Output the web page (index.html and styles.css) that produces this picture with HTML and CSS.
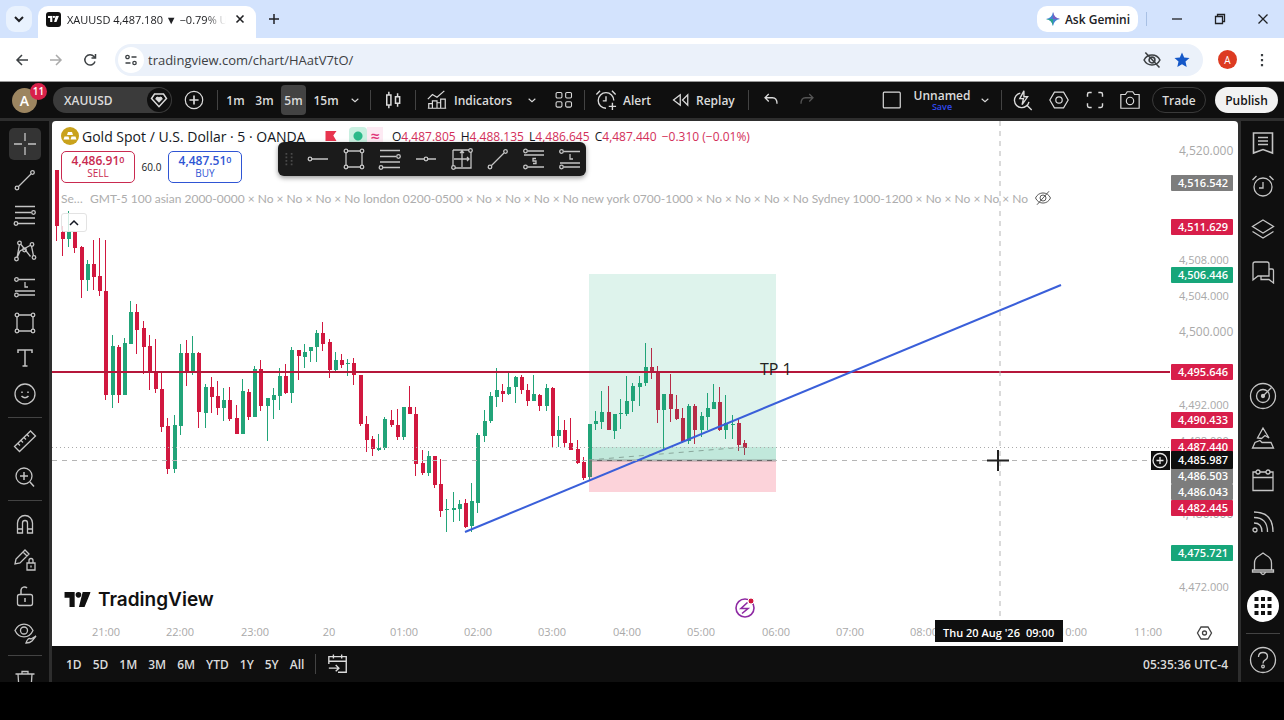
FILE: index.html
```
<!DOCTYPE html>
<html lang="en">
<head>
  <meta charset="UTF-8">
  <meta name="viewport" content="width=device-width, initial-scale=1.0">
  <title>XAUUSD 4,487.180</title>
  <link rel="stylesheet" href="styles.css">
</head>
<body>

  <!-- Shared icons -->
  <svg class="sprite" aria-hidden="true">
    <symbol id="chevron" viewBox="0 0 24 24"><path d="M8 10.5l4 3.5 4-3.5"/></symbol>
    <symbol id="trend" viewBox="0 0 24 24"><path d="M5.5 18.500L18 6"/><circle cx="4" cy="20" r="1.800"/><circle cx="19.500" cy="4.500" r="1.800"/></symbol>
    <symbol id="fib" viewBox="0 0 24 24"><path d="M2 3.500h20M2 9.500h16M2 15h20M5 20.500h17"/><circle cx="20.500" cy="9.500" r="1.800"/><circle cx="3" cy="20.500" r="1.800"/></symbol>
    <symbol id="pattern" viewBox="0 0 24 24"><path d="M4 19L6.500 5M8 5.500l9.500 12M18 6l-11 6-3 7M18.500 7l2 10"/><circle cx="6.500" cy="4" r="1.800"/><circle cx="19" cy="5.500" r="1.800"/><circle cx="11.500" cy="11" r="1.800"/><circle cx="3.500" cy="20" r="1.800"/><circle cx="21" cy="18.500" r="1.800"/></symbol>
    <symbol id="long" viewBox="0 0 24 24"><path d="M5.500 4.500H22M5.500 20H22M2 16h20M12 7v5h3"/><circle cx="3.500" cy="4.500" r="1.800"/><circle cx="3.500" cy="20" r="1.800"/></symbol>
    <symbol id="short" viewBox="0 0 24 24"><path d="M5.500 4H22M2 8h20M5.500 20H22M14 11.500h-3v2.500h3v2.500h-3"/><circle cx="3.500" cy="4" r="1.800"/><circle cx="3.500" cy="20" r="1.800"/></symbol>
    <symbol id="rect" viewBox="0 0 24 24"><path d="M5.500 4h13M5.500 20h13M4 5.500v13M20 5.500v13"/><circle cx="4" cy="4" r="1.800"/><circle cx="20" cy="4" r="1.800"/><circle cx="4" cy="20" r="1.800"/><circle cx="20" cy="20" r="1.800"/></symbol>
    <symbol id="alarm" viewBox="0 0 24 24"><circle cx="12" cy="13" r="9"/><path d="M12 8v6H8M1.500 6l4-4M22.500 6l-4-4"/></symbol>
    <symbol id="hexagon" viewBox="0 0 24 24"><path d="M7 3.500h10l5 8.500-5 8.500H7L2 12z"/><circle cx="12" cy="12" r="3.500"/></symbol>
    <symbol id="eye-off" viewBox="0 0 24 24"><path d="M2 12c4-9 16-9 20 0-4 9-16 9-20 0zM4 21L20 3"/><circle cx="12" cy="12" r="4"/></symbol>
    <symbol id="tv" viewBox="0 0 28 17"><path d="M0 0h11v16H5.500V6H0zM19.500 0H28l-6.500 16h-6z" fill="currentColor" stroke="none"/><circle cx="15" cy="3" r="3" fill="currentColor" stroke="none"/></symbol>
  </svg>

  <header class="browser">
    <div class="tab-strip">
      <button class="tab-search" aria-label="Search tabs"><svg class="i16" viewBox="0 0 24 24"><path d="M6 9l6 6 6-6" stroke-width="3"/></svg></button>
      <div class="tab">
        <span class="favicon"><svg viewBox="0 0 28 17"><use href="#tv"/></svg></span>
        <span class="tab-title">XAUUSD 4,487.180 ▼ −0.79% Unnamed</span>
        <button class="tab-close" aria-label="Close tab"><svg class="i16" viewBox="0 0 16 16"><path d="M4.500 4.500l7 7M11.500 4.500l-7 7" stroke-width="1.600"/></svg></button>
      </div>
      <button class="new-tab" aria-label="New tab"><svg class="i16" viewBox="0 0 16 16"><path d="M8 3v10M3 8h10" stroke-width="1.500"/></svg></button>
      <button class="gemini"><svg class="i16" viewBox="0 0 16 16"><path d="M8 1q1 6 7 7-6 1-7 7-1-6-7-7 6-1 7-7z" fill="#4285d4" stroke="none"/><path d="M8 1q1 6 7 7H8z" fill="#7b5fc0" stroke="none"/><path d="M1 8h7v7q-1-6-7-7z" fill="#2fa58a" stroke="none"/></svg>Ask Gemini</button>
      <span class="strip-sep"></span>
      <div class="window-buttons">
        <button aria-label="Minimise"><svg class="i16" viewBox="0 0 16 16"><path d="M3 8h10"/></svg></button>
        <button aria-label="Restore"><svg class="i16" viewBox="0 0 16 16"><path d="M3.500 5.500h7v7h-7zM5.500 5.500v-2h7v7h-2"/></svg></button>
        <button aria-label="Close"><svg class="i16" viewBox="0 0 16 16"><path d="M3.500 3.500l9 9M12.500 3.500l-9 9"/></svg></button>
      </div>
    </div>
    <div class="address-bar">
      <button class="nav-btn" aria-label="Back"><svg class="i16" viewBox="0 0 16 16"><path d="M14 8H3M8 3L3 8l5 5" stroke-width="1.500"/></svg></button>
      <button class="nav-btn off" aria-label="Forward"><svg class="i16" viewBox="0 0 16 16"><path d="M2 8h11M8 3l5 5-5 5" stroke-width="1.500"/></svg></button>
      <button class="nav-btn" aria-label="Reload"><svg class="i16" viewBox="0 0 16 16"><path d="M13 9.500A5.200 5.200 0 1 1 12 4.500l1.500 1.500M13.500 2v4h-4" stroke-width="1.500"/></svg></button>
      <div class="omnibox">
        <button class="site-info" aria-label="Site information"><svg class="i16" viewBox="0 0 16 16"><circle cx="4.500" cy="5" r="1.700"/><path d="M8.500 5h5M2.500 11h5"/><circle cx="11.500" cy="11" r="1.700"/></svg></button>
        <input type="text" aria-label="Address" value="tradingview.com/chart/HAatV7tO/">
        <svg class="i20" viewBox="0 0 24 24"><path d="M2.500 12c4-8 15-8 19 0-4 8-15 8-19 0zM4 3l17 18" stroke-width="1.900"/><circle cx="12" cy="12" r="3.500" stroke-width="1.900"/></svg>
        <svg class="i16 star" viewBox="0 0 16 16"><path d="M8 .5l2.200 5 5.300.5-4 3.600 1.200 5.400L8 12.200 3.300 15l1.200-5.400-4-3.600 5.300-.5z" stroke="none"/></svg>
      </div>
      <button class="profile" aria-label="Profile">A</button>
      <button class="nav-btn" aria-label="Menu"><svg class="i16" viewBox="0 0 16 16"><path d="M8 2v2.200M8 7v2.200M8 12v2.200" stroke-width="2.200"/></svg></button>
    </div>
  </header>

  <div class="app">
    <header class="topbar">
      <button class="account">A<span class="badge">11</span></button>
      <button class="symbol">XAUUSD<span class="gem"><svg class="i18" viewBox="0 0 24 24"><path d="M6 4h12l4 6-10 11L2 10z" stroke-width="2"/><path d="M12 15l-4-4a2 2 0 0 1 4-1.500A2 2 0 0 1 16 11z" fill="currentColor"/></svg></span></button>
      <button class="w40 plus" aria-label="Compare"><svg class="i22" viewBox="0 0 24 24"><circle cx="12" cy="12" r="9.500"/><path d="M12 7v10M7 12h10" stroke-width="1.800"/></svg></button>
      <span class="sep"></span>
      <button class="interval">1m</button>
      <button class="interval">3m</button>
      <button class="interval active">5m</button>
      <button class="interval long">15m</button>
      <button class="w24" aria-label="More intervals"><svg class="i20"><use href="#chevron"/></svg></button>
      <span class="sep"></span>
      <button class="w38" aria-label="Candles"><svg class="i20" viewBox="0 0 24 24"><path d="M4.500 6h5v12h-5zM7 2v4M7 18v4M15 8h5v8h-5zM17.500 4v4M17.500 16v4" stroke-width="1.800"/></svg></button>
      <span class="sep"></span>
      <button class="labelled indicators"><svg class="i22" viewBox="0 0 24 24"><path d="M3 21v-5h4v5M7 21v-8h5v8M12 21v-6h4v6M16 21V11h5v10zM2 21h20M2 11l5-5 5 3 8-7"/></svg>Indicators</button>
      <button class="w28" aria-label="Indicator templates"><svg class="i20"><use href="#chevron"/></svg></button>
      <button class="w35" aria-label="Layouts"><svg class="i20" viewBox="0 0 24 24"><rect x="2.500" y="3" width="7" height="6.500" rx="1.500"/><rect x="14" y="3" width="7" height="6.500" rx="1.500"/><rect x="2.500" y="14" width="7" height="6.500" rx="1.500"/><rect x="14" y="14" width="7" height="6.500" rx="1.500"/></svg></button>
      <span class="sep"></span>
      <button class="labelled alert"><svg class="i22" viewBox="0 0 24 24"><path d="M12 21a8.500 8.500 0 1 1 8.500-8.500M12 8v5H8.500M1.500 6l4-4M22.500 6l-4-4M19 15v8M15 19h8" stroke-width="1.500"/></svg>Alert</button>
      <button class="labelled replay"><svg class="i18" viewBox="0 0 24 24"><path d="M11 5v14l-9-7zM21 5v14l-7-7z" stroke-width="1.700"/></svg>Replay</button>
      <span class="sep"></span>
      <button class="w38" aria-label="Undo"><svg class="i18" viewBox="0 0 24 24"><path d="M9 4L4 9l5 5M4 9h10q6 0 6 8" stroke-width="1.700"/></svg></button>
      <button class="w34 dim" aria-label="Redo"><svg class="i18" viewBox="0 0 24 24"><path d="M15 4l5 5-5 5M20 9H10q-6 0-6 8" stroke-width="1.700"/></svg></button>

      <button class="w40 push" aria-label="Layout setup"><svg class="i22" viewBox="0 0 24 24"><rect x="2.500" y="3.500" width="18.500" height="17" rx="1"/></svg></button>
      <button class="layout-name">Unnamed<small>Save</small></button>
      <button class="w26" aria-label="Manage layouts"><svg class="i20"><use href="#chevron"/></svg></button>
      <span class="sep"></span>
      <button class="w36" aria-label="Quick search"><svg class="i22" viewBox="0 0 24 24"><path d="M9 4.500A8 8 0 1 0 18.500 14M16.500 18l5 5M13 2L8.500 10.500h4L11 17l6-8.500h-4z" stroke-width="1.500"/></svg></button>
      <button class="w36" aria-label="Settings"><svg class="i22"><use href="#hexagon"/></svg></button>
      <button class="w35" aria-label="Fullscreen"><svg class="i20" viewBox="0 0 24 24"><path d="M3 8V5q0-2 2-2h3M16 3h3q2 0 2 2v3M21 16v3q0 2-2 2h-3M8 21H5q-2 0-2-2v-3" stroke-width="1.700"/></svg></button>
      <button class="w35" aria-label="Snapshot"><svg class="i22" viewBox="0 0 24 24"><path d="M2 6h5l2-3h6l2 3h5v15H2z"/><circle cx="12" cy="13" r="4"/></svg></button>
      <button class="trade">Trade</button>
      <button class="publish">Publish</button>
    </header>

    <aside class="tools">
      <div class="tool-group drawing">
        <button class="active" aria-label="Cross"><svg class="i24" viewBox="0 0 24 24"><path d="M12 1v8M12 15v8M1 12h8M15 12h8"/></svg></button>
        <button aria-label="Trend line"><svg class="i24"><use href="#trend"/></svg></button>
        <button aria-label="Fib retracement"><svg class="i24"><use href="#fib"/></svg></button>
        <button aria-label="Patterns"><svg class="i24"><use href="#pattern"/></svg></button>
        <button aria-label="Long position"><svg class="i24"><use href="#long"/></svg></button>
        <button aria-label="Rectangle"><svg class="i24"><use href="#rect"/></svg></button>
        <button aria-label="Text"><svg class="i24" viewBox="0 0 24 24"><path d="M5 7V4h14v3M12 4v16M9.500 20h5" stroke-width="1.500"/></svg></button>
        <button aria-label="Icons"><svg class="i24" viewBox="0 0 24 24"><circle cx="12" cy="12" r="10"/><path d="M8.500 14q3.500 3.500 7 0M9 9.500v1.500M15 9.500v1.500" stroke-width="1.500"/></svg></button>
      </div>
      <hr>
      <div class="tool-group">
        <button aria-label="Measure"><svg class="i24" viewBox="0 0 24 24"><path d="M1.500 17.500l16-15.500 5 5L6.500 22.500zM5 14.500l2 2M8 11.500l2 2M11 8.500l2 2M14 5.500l2 2"/></svg></button>
        <button aria-label="Zoom in"><svg class="i24" viewBox="0 0 24 24"><circle cx="11" cy="11" r="8"/><path d="M17 17l4 4.500M11 7v8M7 11h8" stroke-width="1.500"/></svg></button>
      </div>
      <hr>
      <div class="tool-group">
        <button aria-label="Magnet"><svg class="i24" viewBox="0 0 24 24"><path d="M4.500 21V11a7.500 7.500 0 0 1 15 0v10h-5V11a2.500 2.500 0 0 0-5 0v10zM4.500 17h5M14.500 17h5"/></svg></button>
        <button aria-label="Stay in drawing mode"><svg class="i24" viewBox="0 0 24 24"><path d="M2 16l1-5 9-9 4 4-9 9zM10 4l4 4M14 15h8v7h-8zM16 15v-2.500a2 2 0 0 1 4 0V15M18 17.500v2"/></svg></button>
        <button aria-label="Lock"><svg class="i24" viewBox="0 0 24 24"><rect x="4.500" y="10.500" width="15" height="11" rx="2"/><path d="M8 10.500V6a3.500 3.500 0 0 1 6-2M12 14v4" stroke-width="1.500"/></svg></button>
        <button aria-label="Hide"><svg class="i24" viewBox="0 0 24 24"><path d="M2 10.500c4-8.500 14-8.500 18 0-4 8.500-14 8.500-18 0z"/><circle cx="11" cy="10.500" r="3.500"/><path d="M13 23q2-6 5-4l5-3-4 5q-2 2-6 2z"/></svg></button>
      </div>
      <hr>
      <button aria-label="Remove"><svg class="i24" viewBox="0 0 24 24"><path d="M2.500 7h19M5 7l1 15h12l1-15M9 7V4.500h6V7"/></svg></button>
    </aside>

    <main>
      <section class="chart">
        <svg class="plot" viewBox="52 121 1186 525" preserveAspectRatio="xMinYMin meet">
          <g id="candles"></g>
          <!-- long position -->
          <rect class="profit" x="589" y="274" width="187" height="186"/>
          <rect class="profit reached" x="589" y="447" width="187" height="13"/>
          <rect class="loss" x="589" y="460" width="187" height="32"/>
          <path class="entry" d="M589 460.500H776"/>
          <path class="path-line" d="M589 460L745 447"/>
          <path class="last-line" d="M52 447.500H1170"/>
          <path class="level" d="M52 372H1170"/>
          <path class="trend-line" d="M465 532L1061 285"/>
          <text class="note" x="760" y="375">TP 1</text>
          <!-- crosshair -->
          <path class="cross-line" d="M52 460.500H1152M1000 121V620"/>
          <path class="cursor" d="M998 450v21M987 460.500h22"/>
          <g class="event"><circle cx="745" cy="608" r="9"/><path d="M747.500 602.500l-6.500 6h7l-6 5"/><circle class="dot" cx="751" cy="601" r="3"/></g>
          <g id="priceAxis"></g>
          <g id="timeAxis"></g>
          <rect class="black" x="1151" y="451" width="19" height="19"/>
          <g class="add"><circle cx="1160" cy="460.500" r="7"/><path d="M1160 457v7M1156.500 460.500h7"/></g>
          <rect class="black" x="935" y="620" width="128" height="22"/>
          <text class="time-tip" x="943" y="637">Thu 20 Aug '26</text>
          <text class="time-tip" x="1026" y="637">09:00</text>
          <g class="axis-gear"><path d="M1201 627h7l3.500 6-3.500 6h-7l-3.500-6z"/><circle cx="1204.500" cy="633" r="2"/></g>
        </svg>

        <div class="legend">
          <div class="legend-row">
            <svg class="i18 gold" viewBox="0 0 18 18"><circle cx="9" cy="9" r="9" fill="#c9a21c"/><path d="M7 5h4l1 3H6zM3.500 9.500h4l1 3h-6zM10.500 9.500h4l1 3h-6z" fill="#fff"/></svg>
            <h1>Gold Spot / U.S. Dollar · 5 · OANDA</h1>
            <svg class="flag" viewBox="0 0 12 12"><path d="M0 0h12L8.500 5 12 11H0z" fill="#e8354f"/></svg>
            <span class="market"></span>
            <span class="delayed">≈</span>
            <p class="ohlc">O<b>4,487.805</b> H<b>4,488.135</b> L<b>4,486.645</b> C<b>4,487.440</b> <b>−0.310 (−0.01%)</b></p>
          </div>
          <div class="quotes">
            <button class="quote sell"><strong>4,486.91<sup>0</sup></strong>SELL</button>
            <span class="spread">60.0</span>
            <button class="quote buy"><strong>4,487.51<sup>0</sup></strong>BUY</button>
          </div>
          <div class="study">
            <span class="study-name">Se…</span>
            <span class="study-inputs">GMT-5 100 asian 2000-0000 × No × No × No × No london 0200-0500 × No × No × No × No new york 0700-1000 × No × No × No × No Sydney 1000-1200 × No × No × No × No Harmonic</span>
            <svg class="i18"><use href="#eye-off"/></svg>
          </div>
          <button class="collapse" aria-label="Collapse legend"><svg class="i16" viewBox="0 0 16 16"><path d="M4 10l4-4 4 4" stroke-width="1.500"/></svg></button>
        </div>

        <div class="favorites">
          <svg class="grip" viewBox="0 0 10 16"><path d="M1 2h2M7 2h2M1 6h2M7 6h2M1 10h2M7 10h2M1 14h2M7 14h2" stroke-width="2"/></svg>
          <button aria-label="Horizontal ray"><svg class="i24" viewBox="0 0 24 24"><circle cx="4" cy="12" r="1.800"/><path d="M6 12h16"/></svg></button>
          <button aria-label="Rectangle"><svg class="i24"><use href="#rect"/></svg></button>
          <button aria-label="Fib retracement"><svg class="i24"><use href="#fib"/></svg></button>
          <button aria-label="Horizontal line"><svg class="i24" viewBox="0 0 24 24"><circle cx="12" cy="12" r="1.800"/><path d="M2 12h8M14 12h8"/></svg></button>
          <button aria-label="Date and price range"><svg class="i24" viewBox="0 0 24 24"><path d="M3 3h16M21 5v16H5M3 3v16M12 4v16M4 12h15M10 6l2-2 2 2M17 10l2 2-2 2"/><circle cx="20.500" cy="3.500" r="1.800"/><circle cx="3.500" cy="20.500" r="1.800"/></svg></button>
          <button aria-label="Trend line"><svg class="i24"><use href="#trend"/></svg></button>
          <button aria-label="Short position"><svg class="i24"><use href="#short"/></svg></button>
          <button aria-label="Long position"><svg class="i24"><use href="#long"/></svg></button>
        </div>

        <a class="brand" href="#"><svg viewBox="0 0 28 17"><use href="#tv"/></svg>TradingView</a>
      </section>

      <footer class="ranges">
        <button>1D</button>
        <button>5D</button>
        <button>1M</button>
        <button>3M</button>
        <button>6M</button>
        <button>YTD</button>
        <button>1Y</button>
        <button>5Y</button>
        <button>All</button>
        <span class="sep"></span>
        <button aria-label="Go to date"><svg class="i22" viewBox="0 0 24 24"><path d="M2 9V4h19v5M2 9h19M2 9v3M21 9v12h-9M7 1.500V6M16 1.500V6M2 16.500h11M9.500 13l3.500 3.500L9.500 20" stroke-width="1.500"/></svg></button>
        <button class="clock">05:35:36 UTC-4</button>
      </footer>
    </main>

    <aside class="widgets">
      <div class="widget-group top">
        <button aria-label="Watchlist"><svg class="i24" viewBox="0 0 24 24"><path d="M2.500 2h19v20L12 18.500 2.500 22zM7 6.500h10M7 10h10M7 13.500h10" stroke-width="1.600"/></svg></button>
        <button aria-label="Alerts"><svg class="i24"><use href="#alarm"/></svg></button>
        <button aria-label="Object tree"><svg class="i24" viewBox="0 0 24 24"><path d="M12 3l10.500 6.500L12 16 1.500 9.500zM1.500 14.500L12 21l10.500-6.500"/></svg></button>
        <button aria-label="Chats"><svg class="i24" viewBox="0 0 24 24"><path d="M4 2h12q2 0 2 2v12H7l-5 4V4q0-2 2-2zM18 9h3q1.500 0 1.500 1.500V23l-4.500-3.500H10V16"/></svg></button>
      </div>
      <div class="widget-group bottom">
        <button aria-label="Screeners"><svg class="i28" viewBox="0 0 28 28"><circle cx="14" cy="14" r="12.500"/><circle cx="14" cy="14" r="6.500"/><circle cx="14" cy="14" r="1.500" fill="currentColor"/><path d="M14 14l8.500-8.500"/></svg></button>
        <button aria-label="Pine"><svg class="i24" viewBox="0 0 24 24"><path d="M6.500 12L12 2l6 10-4-2.500-3.500 3zM4 16.500L1.500 22h21L20 16.500l-9 0-2-2z"/></svg></button>
        <button aria-label="Calendar"><svg class="i24" viewBox="0 0 24 24"><path d="M5 4H2v18.500h20V4h-3M9 4h6M2 9.500h20"/><circle cx="7" cy="4" r="2"/><circle cx="17" cy="4" r="2"/></svg></button>
        <button aria-label="News"><svg class="i24" viewBox="0 0 24 24"><circle cx="4" cy="20" r="2"/><path d="M3 13q8 0 8 9M3 7.500q13.500 0 13.500 14.500M3 2q19 0 19 20"/></svg></button>
        <button aria-label="Notifications"><svg class="i24" viewBox="0 0 24 24"><path d="M3.500 18v-7q0-5 5-7.500L12 1l3.500 2.500q5 2.500 5 7.500v7M1.500 18h21v2h-21zM9.500 20.500q2.500 4 5 0"/></svg></button>
        <button class="apps" aria-label="Apps"><svg class="i20" viewBox="0 0 20 20"><path d="M1.500 3h4M8 3h4M14.500 3h4M1.500 10h4M8 10h4M14.500 10h4M1.500 17h4M8 17h4M14.500 17h4" stroke-width="4"/></svg></button>
        <hr>
        <button aria-label="Help"><svg class="i28" viewBox="0 0 28 28"><circle cx="14" cy="14" r="12.500"/><path d="M9.500 11q0-4.500 4.500-4.500t4.500 4q0 2.500-2.500 3.700-2 1-2 3.300"/><circle cx="14" cy="20.500" r="1.300"/></svg></button>
      </div>
    </aside>
  </div>

  <script src="script.js"></script>
</body>
</html>
```
FILE: styles.css
```
* {
  box-sizing: border-box;
}

body {
  margin: 0;
  height: 100vh;
  min-height: 720px;
  padding-bottom: 38px;
  display: flex;
  flex-direction: column;
  background: #000;
  font-family: "Open Sans", "Noto Sans", sans-serif;
  font-size: 12px;
}

button {
  display: flex;
  align-items: center;
  justify-content: center;
  flex: none;
  padding: 0;
  border: 0;
  background: none;
  color: inherit;
  font: inherit;
  white-space: nowrap;
  cursor: pointer;
}

svg {
  flex: none;
  fill: none;
  stroke: currentColor;
  stroke-width: 1.3;
}

.sprite { position: absolute; width: 0; height: 0; }
.i16 { width: 16px; height: 16px; }
.i18 { width: 18px; height: 18px; }
.i20 { width: 20px; height: 20px; }
.i22 { width: 22px; height: 22px; }
.i24 { width: 24px; height: 24px; }
.i28 { width: 28px; height: 28px; }

/* Browser window */
.browser {
  background: #fff;
  color: #202124;
}

.tab-strip {
  display: flex;
  align-items: center;
  height: 38px;
  padding-left: 6px;
  background: #d3e3fd;
}

.tab-search {
  width: 26px;
  height: 26px;
  border-radius: 9px;
  background: #e9f2fe;
}

.tab {
  display: flex;
  align-items: center;
  align-self: flex-end;
  width: 218px;
  height: 32px;
  margin-left: 6px;
  padding: 0 8px 6px;
  border-radius: 10px 10px 0 0;
  background: #fff;
}

.favicon {
  display: flex;
  align-items: center;
  justify-content: center;
  width: 15px;
  height: 15px;
  border-radius: 3px;
  background: #111;
  color: #fff;
}

.favicon svg { width: 11px; height: 8px; }

.tab-title {
  flex: 1;
  margin-left: 6px;
  overflow: hidden;
  white-space: nowrap;
  font-size: 11px;
  -webkit-mask-image: linear-gradient(to left, transparent, #000 20px);
  mask-image: linear-gradient(to left, transparent, #000 20px);
}

.tab-close { margin-left: 6px; }
.new-tab { margin-left: 10px; }

.gemini {
  gap: 4px;
  width: 101px;
  height: 26px;
  margin-left: auto;
  border-radius: 10px;
  background: #fff;
  font-weight: 600;
}

.strip-sep {
  width: 1px;
  height: 14px;
  margin-left: 8px;
  background: #a8c0e4;
}

.window-buttons { display: flex; margin-left: 8px; }
.window-buttons button { width: 43px; height: 30px; }

.address-bar {
  display: flex;
  align-items: center;
  height: 44px;
  padding: 0 5px;
  border-bottom: 1px solid #999;
}

.nav-btn { width: 34px; height: 30px; color: #3c4043; }
.off { color: #aaa; }

.omnibox {
  display: flex;
  flex: 1;
  align-items: center;
  height: 32px;
  margin-left: 8px;
  padding: 0 13px 0 3px;
  border-radius: 16px;
  background: #ebf1fa;
  color: #3c4043;
}

.site-info {
  width: 26px;
  height: 26px;
  border-radius: 50%;
  background: #fff;
}

.omnibox input {
  flex: 1;
  min-width: 0;
  padding: 0 4px;
  border: 0;
  background: none;
  color: #3c4043;
  font: inherit;
  font-size: 13px;
}

.star { margin-left: 12px; fill: #1558c8; }

.profile {
  width: 19px;
  height: 19px;
  margin: 0 8px 0 15px;
  border-radius: 50%;
  background: #dd3b22;
  color: #fff;
  font-size: 10px;
}

/* Charting app */
.app {
  display: grid;
  flex: 1;
  min-height: 0;
  grid-template: 36px minmax(0, 1fr) / 49px minmax(0, 1fr) 43px;
  gap: 3px;
  background: #2e2e2e;
  color: #dbdbdb;
}

.topbar {
  grid-column: 1 / -1;
  display: flex;
  align-items: center;
  padding: 0 6px 0 12px;
  background: #0f0f0f;
  font-weight: 600;
}

.topbar button { height: 30px; }
.sep { flex: none; width: 1px; height: 20px; margin: 0 3px; background: #434343; }

.w24 { width: 24px; }
.w26 { width: 26px; }
.w28 { width: 28px; }
.w34 { width: 34px; }
.w35 { width: 35px; }
.w36 { width: 36px; }
.w38 { width: 38px; }
.w40 { width: 40px; }
.push { margin-left: auto; }
.dim { color: #555; }

.topbar .account {
  position: relative;
  width: 25px;
  height: 25px;
  border-radius: 50%;
  background: #9c8560;
  color: #fff;
  font-size: 14px;
}

.badge {
  position: absolute;
  top: -5px;
  left: 18px;
  width: 17px;
  height: 17px;
  border-radius: 50%;
  background: #d8214a;
  font-size: 10px;
  line-height: 17px;
  text-align: center;
}

.topbar .symbol {
  justify-content: space-between;
  width: 119px;
  height: 26px;
  margin-left: 16px;
  padding: 0 1px 0 11px;
  border-radius: 13px;
  background: #3b3b3b;
}

.gem {
  display: flex;
  align-items: center;
  justify-content: center;
  width: 24px;
  height: 24px;
  border-radius: 50%;
  background: #0f0f0f;
}

.plus { margin-left: 2px; }

.interval { width: 29px; }
.interval.active { width: 25px; margin: 0 3px 0 2px; border-radius: 4px; background: #434343; }
.interval.long { width: 34px; }

.labelled {
  justify-content: flex-start;
  gap: 6px;
  padding-left: 7px;
}

.indicators { width: 99px; }
.alert { width: 74px; }
.replay { width: 83px; padding-left: 10px; }

.layout-name {
  flex-direction: column;
  width: 60px;
  line-height: 13px;
}

.layout-name small { color: #2f49f0; font-size: 9px; line-height: 9px; }

.trade {
  width: 54px;
  margin: 0 9px 0 5px;
  border: 1px solid #3a3a3a;
  border-radius: 15px;
}

.topbar .trade, .topbar .publish { height: 26px; }

.publish {
  width: 63px;
  border-radius: 13px;
  background: #f2f2f2;
  color: #131313;
}

.tools, .widgets {
  display: flex;
  flex-direction: column;
  align-items: center;
  overflow: hidden;
  background: #0f0f0f;
  color: #c4c4c4;
}

.tools { padding-top: 7px; }
.tools button, .widgets button { width: 32px; height: 32px; }
.tools .active { border-radius: 5px; background: #343434; }

.tool-group {
  display: flex;
  flex: none;
  flex-direction: column;
  gap: 4px;
}

.drawing {
  height: 282px;
  justify-content: space-between;
  gap: 0;
}

hr {
  flex: none;
  width: 34px;
  height: 1px;
  margin: 7px 0;
  border: 0;
  background: #434343;
}

.widgets { justify-content: space-between; padding: 6px 0; }
.widget-group { display: flex; flex-direction: column; align-items: center; }
.widget-group.top { gap: 11px; }
.widget-group.bottom { gap: 10px; }
.widget-group hr { margin: 1px 0 0; }
.apps { border-radius: 50%; background: #fff; color: #111; }

main {
  display: flex;
  flex-direction: column;
  min-width: 0;
}

.chart {
  position: relative;
  flex: 1;
  min-height: 0;
  border-radius: 4px 4px 0 0;
  background: #fff;
  color: #131722;
  overflow: hidden;
}

.plot { display: block; width: 100%; height: 100%; }
.plot text { stroke: none; }
.up { fill: #22a479; stroke: #22a479; stroke-width: 1; }
.down { fill: #d1183f; stroke: #d1183f; stroke-width: 1; }
.body { stroke: none; }
.profit { fill: #16a876; fill-opacity: 0.14; stroke: none; }
.loss { fill: #f23657; fill-opacity: 0.22; stroke: none; }
.entry { stroke: #666; }
.path-line { stroke: #8aa79c; stroke-width: 1; stroke-dasharray: 5 5; }
.last-line { stroke: #aaa; stroke-width: 1; stroke-dasharray: 1 3; }
.level { stroke: #b5173a; stroke-width: 2; }
.trend-line { stroke: #3a5fd9; stroke-width: 2; }
.cross-line { stroke: #b5b5b5; stroke-width: 1; stroke-dasharray: 5 5; }
.cursor { stroke: #222; stroke-width: 2; }
.plot .note { fill: #222; font-size: 16px; }
.event { stroke: #8e2aa3; stroke-width: 1.6; }
.dot { fill: #d1183f; stroke: #fff; stroke-width: 1; }
.black { fill: #0f0f0f; stroke: none; }
.add { stroke: #e8e8e8; }
.axis-gear { stroke: #444; }
.tick { fill: #a9a9a9; font-size: 11px; }
.tick.wide { font-size: 12px; }
.time { fill: #a9a9a9; font-size: 11px; text-anchor: middle; }
.time-tip { fill: #fff; font-size: 11px; font-weight: 600; }
.tag { stroke: none; }
.tag-text { fill: #fff; font-size: 11px; font-weight: 600; }
.gray { fill: #7d7d7d; }
.red { fill: #d81e4a; }
.green { fill: #17a67a; }

/* Legend over the plot */
.legend {
  position: absolute;
  top: 5px;
  left: 9px;
  width: 991px;
}

.legend-row { display: flex; align-items: center; height: 20px; white-space: nowrap; }
.gold { stroke: none; }
.legend h1 { width: 232px; margin: 0 11px 0 3px; font-size: 14px; font-weight: 400; }
.flag { width: 12px; height: 11px; stroke: none; }

.market {
  width: 18px;
  height: 18px;
  margin-left: 12px;
  border-radius: 4px;
  background: radial-gradient(circle, #2cb98a 4px, #c9f0e1 5px);
}

.delayed { width: 16px; background: #fdeaf3; color: #e0367a; font-size: 16px; font-weight: 600; line-height: 18px; text-align: center; }
.ohlc { margin: 0 0 0 9px; }
.ohlc b { margin-right: 2px; color: #d3305a; font-weight: 400; }

.quotes { display: flex; align-items: center; height: 32px; margin-top: 5px; }

.quote {
  flex-direction: column;
  width: 74px;
  height: 32px;
  border: 1px solid;
  border-radius: 5px;
  background: #fff;
  font-size: 10px;
  line-height: 13px;
}

.quote strong { font-size: 12px; font-weight: 600; }
.quote sup { font-size: 9px; line-height: 0; vertical-align: 2px; }
.sell { color: #c92a50; }
.buy { color: #2f55d4; }
.spread { width: 33px; font-size: 10px; text-align: center; }

.study {
  display: flex;
  align-items: center;
  height: 18px;
  margin-top: 6px;
  color: #adadad;
  font-family: Lato, sans-serif;
  white-space: nowrap;
}

.study-name { width: 29px; }
.study-inputs { flex: 1; min-width: 0; margin-right: 5px; overflow: hidden; }
.study svg { color: #555; }

.collapse {
  width: 26px;
  height: 19px;
  margin-top: 6px;
  border: 1px solid #e3e3e3;
  border-radius: 3px;
  background: #ffffffcc;
}

/* Floating favourites */
.favorites {
  position: absolute;
  top: 21px;
  left: 226px;
  display: flex;
  align-items: center;
  width: 308px;
  height: 34px;
  padding-left: 6px;
  border-radius: 6px;
  background: #1b1b1b;
  color: #c4c4c4;
  box-shadow: 0 2px 5px rgba(0, 0, 0, 0.4);
}

.favorites button { width: 36px; height: 34px; }
.grip { width: 10px; height: 14px; margin-right: 6px; color: #4a4a4a; }

.brand {
  position: absolute;
  bottom: 32px;
  left: 12px;
  display: flex;
  align-items: center;
  gap: 7px;
  color: #111;
  font-family: Inter, sans-serif;
  font-size: 19px;
  font-weight: 600;
  line-height: 28px;
  text-decoration: none;
}

.brand svg { width: 27px; height: 16px; }

.ranges {
  display: flex;
  align-items: center;
  gap: 11px;
  height: 36px;
  padding: 0 10px 0 14px;
  background: #0f0f0f;
  font-weight: 600;
}

.ranges .sep { margin: 0; }
.clock { margin-left: auto; }
```
FILE: script.js
```
const FIRST_X = 56.7;
const STEP = 6.2;

// direction, high, body top, body bottom, low
const candles = [
  ['d', 170, 170, 226, 241], ['d', 226, 232, 239, 256], ['u', 211, 232, 239, 247], ['d', 231, 232, 248, 253],
  ['d', 246, 247, 280, 298], ['u', 260, 264, 280, 291], ['d', 240, 264, 277, 290], ['d', 238, 276, 291, 296],
  ['d', 240, 291, 395, 400], ['u', 335, 346, 395, 408], ['d', 345, 347, 395, 403], ['u', 338, 343, 395, 395],
  ['u', 301, 312, 344, 344], ['d', 304, 312, 330, 354], ['d', 321, 328, 347, 374], ['d', 335, 346, 372, 390],
  ['d', 339, 372, 389, 393], ['d', 373, 389, 427, 432], ['d', 418, 426, 469, 474], ['u', 415, 425, 469, 473],
  ['u', 344, 353, 426, 435], ['d', 340, 353, 372, 386], ['u', 336, 353, 372, 375], ['d', 352, 353, 412, 428],
  ['u', 384, 387, 413, 428], ['d', 377, 387, 397, 413], ['d', 381, 396, 408, 415], ['u', 388, 400, 408, 421],
  ['d', 387, 400, 419, 421], ['d', 405, 418, 434, 434], ['u', 379, 391, 434, 434], ['d', 389, 392, 417, 420],
  ['u', 366, 369, 417, 417], ['d', 360, 369, 406, 411], ['u', 398, 398, 406, 441], ['u', 388, 395, 400, 419],
  ['u', 368, 376, 396, 410], ['d', 364, 376, 393, 394], ['u', 347, 350, 393, 403], ['d', 350, 350, 356, 380],
  ['u', 344, 352, 357, 368], ['u', 347, 347, 351, 362], ['u', 330, 333, 347, 362], ['d', 322, 333, 344, 351],
  ['d', 339, 342, 370, 378], ['u', 352, 360, 370, 371], ['d', 354, 360, 365, 368], ['u', 359, 363, 364, 376],
  ['d', 358, 363, 375, 385], ['d', 375, 375, 424, 426], ['d', 416, 424, 440, 452], ['d', 436, 439, 449, 456],
  ['u', 434, 448, 450, 451], ['u', 417, 419, 448, 450], ['d', 410, 420, 425, 427], ['d', 409, 425, 437, 440],
  ['u', 407, 407, 437, 440], ['d', 386, 407, 414, 414], ['d', 407, 414, 464, 476], ['d', 450, 463, 473, 475],
  ['u', 451, 456, 473, 476], ['d', 456, 456, 485, 488], ['d', 459, 484, 511, 517], ['u', 499, 509, 510, 532],
  ['u', 492, 508, 510, 522], ['u', 500, 504, 509, 521], ['d', 499, 503, 527, 528], ['u', 483, 501, 526, 532],
  ['u', 433, 435, 503, 513], ['u', 410, 421, 436, 442], ['u', 392, 396, 421, 423], ['u', 368, 390, 397, 407],
  ['d', 384, 391, 394, 402], ['u', 373, 387, 394, 395], ['u', 376, 377, 387, 403], ['d', 375, 377, 390, 394],
  ['d', 384, 390, 401, 406], ['u', 375, 394, 401, 401], ['d', 394, 395, 406, 411], ['u', 384, 388, 406, 411],
  ['d', 387, 388, 436, 447], ['u', 416, 430, 436, 447], ['d', 420, 430, 443, 448], ['d', 418, 443, 450, 450],
  ['d', 440, 449, 463, 464], ['d', 457, 462, 478, 480], ['u', 424, 424, 477, 480], ['u', 411, 421, 424, 430],
  ['u', 391, 412, 422, 429], ['d', 386, 412, 430, 430], ['u', 414, 414, 431, 439], ['u', 399, 413, 414, 429],
  ['u', 376, 401, 414, 416], ['u', 383, 386, 401, 412], ['u', 376, 383, 387, 406], ['u', 343, 367, 383, 386],
  ['d', 348, 367, 372, 379], ['d', 366, 372, 410, 423], ['u', 394, 394, 410, 449], ['d', 374, 394, 409, 422],
  ['d', 395, 409, 419, 420], ['d', 408, 418, 442, 443], ['u', 404, 406, 441, 444], ['d', 404, 406, 430, 444],
  ['u', 412, 416, 430, 437], ['u', 393, 408, 417, 430], ['u', 384, 402, 409, 409], ['d', 387, 402, 430, 431],
  ['u', 395, 423, 430, 439], ['u', 415, 424, 425, 439], ['d', 418, 423, 445, 451], ['d', 440, 443, 448, 455]
];

document.getElementById('candles').innerHTML = candles.map(([dir, high, top, bottom, low], i) => {
  const x = Math.round(FIRST_X + i * STEP);
  return `<g class="${dir === 'u' ? 'up' : 'down'}">
    <path d="M${x - 0.5} ${high}V${low}"/>
    <rect class="body" x="${x - 2}" y="${top}" width="4" height="${bottom - top}"/>
  </g>`;
}).join('');

// Price scale
const priceToY = price => 151 + (4520 - price) * 9.073;

const tags = [
  ['4,516.542', 183, 'gray'],
  ['4,511.629', 227, 'red'],
  ['4,506.446', 275, 'green'],
  ['4,495.646', 372, 'red'],
  ['4,490.433', 420, 'red'],
  ['4,487.440', 447, 'red'],
  ['4,486.503', 476, 'gray'],
  ['4,486.043', 492, 'gray'],
  ['4,482.445', 508, 'red'],
  ['4,475.721', 553, 'green'],
  ['4,485.987', 460, 'black']
];

let axis = '';
for (let price = 4520; price >= 4472; price -= 4) {
  const y = Math.round(priceToY(price));
  // skip prices fully hidden behind a tag
  if (tags.some(tag => Math.abs(tag[1] - y) < 5)) continue;
  const size = price % 20 === 0 ? 'tick wide' : 'tick';
  axis += `<text class="${size}" x="1179" y="${y + 4}">${price.toLocaleString('en-US')}.000</text>`;
}
tags.forEach(([text, y, color]) => {
  const height = color === 'black' ? 18 : 16;
  axis += `<rect class="tag ${color}" x="1171" y="${y - height / 2}" width="62" height="${height}" rx="1"/>
    <text class="tag-text" x="1178" y="${y + 4}">${text}</text>`;
});
document.getElementById('priceAxis').innerHTML = axis;

// Time scale, 09:00 is covered by the crosshair label
const times = ['21:00', '22:00', '23:00', '20', '01:00', '02:00', '03:00', '04:00', '05:00', '06:00', '07:00', '08:00', '', '10:00', '11:00'];
document.getElementById('timeAxis').innerHTML = times
  .map((time, i) => `<text class="time" x="${Math.round(106 + i * 74.4)}" y="636">${time}</text>`)
  .join('');
```
